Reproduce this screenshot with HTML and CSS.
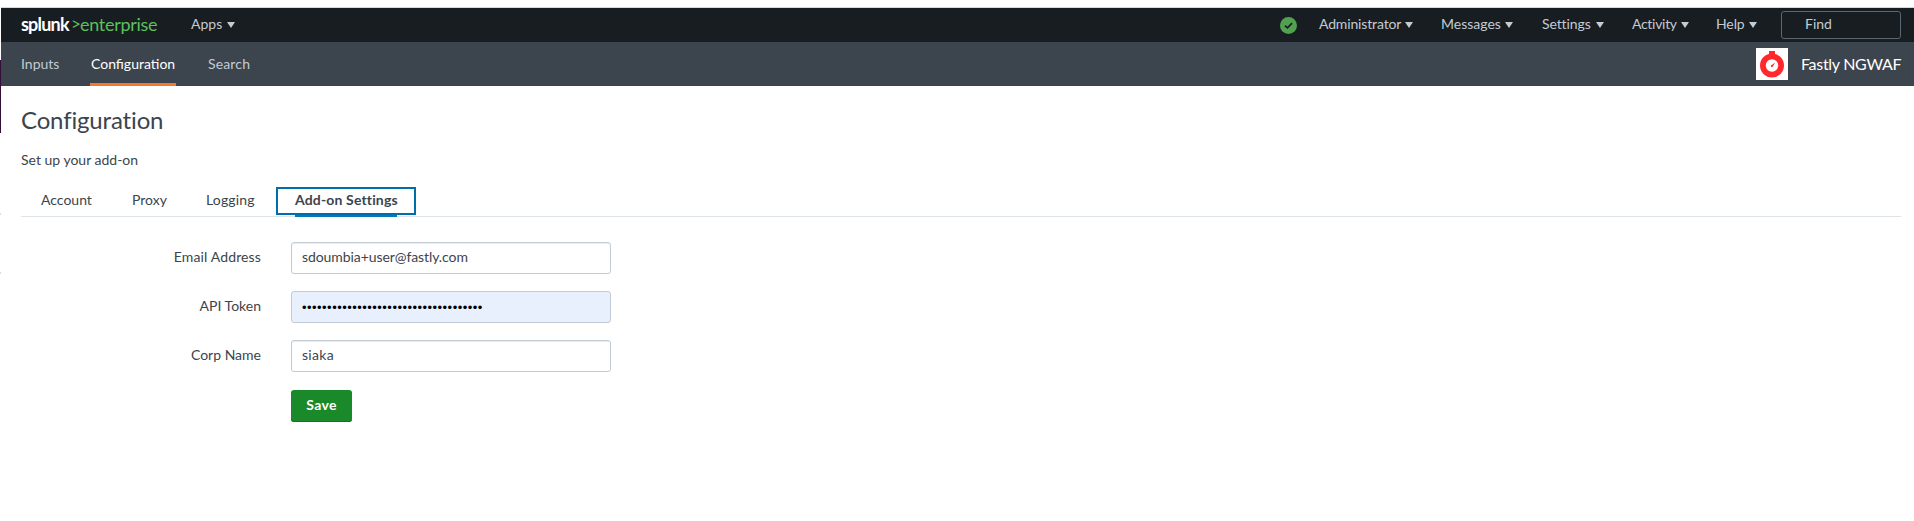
FILE: index.html
```
<!DOCTYPE html>
<html lang="en">
<head>
<meta charset="utf-8">
<title>Configuration | Splunk Enterprise</title>
<link rel="stylesheet" href="styles.css">
</head>
<body>
<div class="window-edge"><i class="edge-dark"></i><i class="edge-tick"></i><i class="edge-tick edge-tick-low"></i></div>
<div class="app">
  <header class="topbar">
    <a class="brand"><b>splunk</b><span class="chevron">&gt;</span><span class="product">enterprise</span></a>
    <a class="menu apps">Apps<i class="caret"></i></a>
    <div class="tools">
      <svg class="status" width="17" height="17" viewBox="0 0 17 17"><circle cx="8.5" cy="8.5" r="8.5" fill="#53a051"/><path d="M5 8.6 7.5 10.9 12 6.1" fill="none" stroke="#171d21" stroke-width="1.7"/></svg>
      <a class="menu administrator">Administrator<i class="caret"></i></a>
      <a class="menu messages">Messages<i class="caret"></i></a>
      <a class="menu settings">Settings<i class="caret"></i></a>
      <a class="menu activity">Activity<i class="caret"></i></a>
      <a class="menu help">Help<i class="caret"></i></a>
      <div class="find">Find</div>
    </div>
  </header>
  <nav class="appbar">
    <a class="inputs">Inputs</a>
    <a class="current">Configuration</a>
    <a class="search">Search</a>
    <div class="app-label">
      <svg width="32" height="32" viewBox="0 0 32 32"><path fill="#fff" d="M0 0h32v32H0z"/><path fill="#ff282d" d="M13 3h6v4h-6z"/><circle cx="16" cy="17.5" r="12" fill="#ff282d"/><circle cx="16" cy="17.5" r="6.2" fill="#fff"/><path d="M15 17.4 19.2 14.5 16.6 18.8z" fill="#ff282d"/><circle cx="15.8" cy="18" r="1" fill="#ff282d"/></svg>
      <span>Fastly NGWAF</span>
    </div>
  </nav>
  <main>
    <h1><span>Configuration</span></h1>
    <p class="subtitle"><span>Set up your add-on</span></p>
    <div class="tabs">
      <a class="tab account"><span>Account</span></a>
      <a class="tab proxy"><span>Proxy</span></a>
      <a class="tab logging"><span>Logging</span></a>
      <a class="tab selected"><span>Add-on Settings</span></a>
    </div>
    <form class="form">
      <div class="row"><label class="l-email">Email Address</label><div class="field"><span class="v-email">sdoumbia+user@fastly.com</span></div></div>
      <div class="row"><label class="l-token">API Token</label><div class="field filled"><span class="dots">••••••••••••••••••••••••••••••••••••</span></div></div>
      <div class="row"><label class="l-corp">Corp Name</label><div class="field"><span class="v-corp">siaka</span></div></div>
      <div class="save"><span>Save</span></div>
    </form>
  </main>
</div>
</body>
</html>
```
FILE: styles.css
```
* { box-sizing: border-box; }
body {
  margin: 0;
  height: 521px;
  display: flex;
  overflow: hidden;
  background: #fff;
  color: #3c444d;
  font: 14px/20px Lato, "Liberation Sans", sans-serif;
}
h1, p { margin: 0; }
a, span, label { white-space: nowrap; }

/* Sliver of the neighbouring window */
.window-edge { width: 1px; padding-top: 60px; }
.window-edge i { display: block; }
.edge-dark { height: 73px; background: #350d36; }
.edge-tick { height: 2px; margin-top: 80px; background: #ddd; }
.edge-tick-low { margin-top: 57px; }

.app { flex: 1; padding-top: 7px; }
.topbar {
  height: 35px;
  display: flex;
  align-items: center;
  border-top: 1px solid #d5d7d9;
  padding: 0 13px 0 20px;
  background: #171d21;
  color: #c3cbd4;
}
.brand { display: flex; width: 170px; padding-bottom: 2px; font-size: 18px; line-height: 20px; }
.brand b { width: 50px; color: #fff; letter-spacing: -.8px; }
.chevron { width: 9px; color: #5cc05c; font-size: 17px; }
.product { color: #5cc05c; letter-spacing: -.3px; }
.menu { display: flex; align-items: center; padding-bottom: 2px; }
.caret { margin: 1px 0 0 4px; border: 4.5px solid transparent; border-top: 6px solid #c3cbd4; border-bottom: 0; }
.tools { display: flex; align-items: center; margin-left: auto; }
.status { margin-right: 22px; }
.administrator { width: 122px; letter-spacing: -.15px; }
.messages { width: 101px; }
.settings { width: 90px; }
.activity { width: 84px; letter-spacing: -.3px; }
.help { width: 65px; }
.help, .settings { letter-spacing: -.1px; }
.apps .caret { margin-left: 5px; }
.settings .caret { margin-left: 5px; }
.find {
  width: 120px;
  height: 28px;
  padding: 2px 23px;
  border: 1px solid #5c6773;
  border-radius: 3px;
}

.appbar {
  height: 44px;
  display: flex;
  align-items: stretch;
  padding: 0 13px 0 20px;
  background: #3c444d;
  color: #c3cbd4;
  line-height: 43px;
}
.inputs { width: 69px; }
.current { width: 86px; padding-left: 1px; border-bottom: 3px solid #f4772f; color: #fff; }
.search { margin-left: 32px; letter-spacing: .15px; }
.app-label { display: flex; align-items: center; gap: 13px; margin-left: auto; color: #fff; font-size: 16px; }
.app-label span { width: 100px; padding-bottom: 2px; letter-spacing: -.3px; }

main { padding: 22px 13px 0 20px; }
h1 { height: 42px; font-size: 24px; line-height: 24px; font-weight: 400; letter-spacing: -.15px; }
.subtitle { height: 37px; }
.tabs { display: flex; height: 30px; border-bottom: 1px solid #dfe4e8; }
.tab { height: 28px; padding-left: 20px; line-height: 26px; }
.account { width: 91px; }
.proxy { width: 74px; }
.logging { width: 90px; letter-spacing: .15px; }
.selected {
  display: flex;
  width: 140px;
  height: 28px;
  padding: 0 17px;
  border: 2px solid #006eaa;
  font-weight: bold;
  line-height: 22px;
}
.selected span { width: 102px; height: 28px; border-bottom: 2px solid #007abd; letter-spacing: .15px; }

.form { display: flex; flex-direction: column; gap: 17px; padding-top: 25px; }
.row { display: flex; align-items: center; gap: 30px; }
.row label { width: 240px; padding-bottom: 2px; text-align: right; }
.l-email { letter-spacing: .13px; }
.field {
  width: 320px;
  height: 32px;
  padding: 4px 10px;
  border: 1px solid #c3cbd4;
  border-radius: 3px;
  box-shadow: inset 0 1px 1px #e8ebee;
}
.v-email { letter-spacing: -.08px; }
.v-corp { letter-spacing: .3px; }
.filled { background: #e8f0fe; box-shadow: none; }
.dots { display: block; padding-top: 2px; color: #000; font: 13px/20px "Liberation Sans", sans-serif; letter-spacing: .47px; }
.save {
  width: 61px;
  height: 32px;
  margin: 1px 0 0 270px;
  border-radius: 3px;
  background: #1a8929;
  box-shadow: inset 0 -1px #167523;
  color: #fff;
  font-weight: bold;
  letter-spacing: .3px;
  line-height: 30px;
  text-align: center;
}
```
